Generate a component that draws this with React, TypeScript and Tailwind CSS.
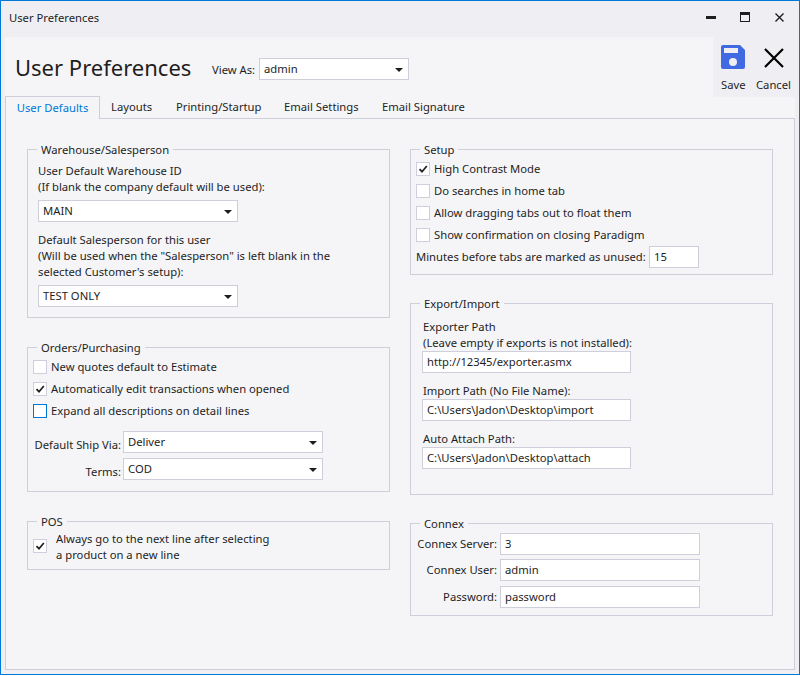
import type { ReactNode } from 'react';

const BORDER = 'border-[#cfcfdc]';

function Group({ title, className, children }: { title: string; className: string; children: ReactNode }) {
  return (
    <div className={`absolute border ${BORDER} ${className}`}>
      <span className="absolute left-[9px] top-[-8px] bg-[#f5f5f8] px-[4px] leading-[16px]">{title}</span>
      {children}
    </div>
  );
}

function Arrow() {
  return (
    <svg width="8" height="4" viewBox="0 0 8 4" className="absolute right-[5px] top-[9px]">
      <path d="M0 0h8L4 4z" fill="#1e1e1e" />
    </svg>
  );
}

function Select({ value, className }: { value: string; className: string }) {
  return (
    <div className={`absolute h-[22px] border ${BORDER} bg-white pl-[4px] leading-[20px] ${className}`}>
      {value}
      <Arrow />
    </div>
  );
}

function Input({ value, className }: { value: string; className: string }) {
  return <div className={`absolute h-[22px] border ${BORDER} bg-white pl-[4px] leading-[20px] ${className}`}>{value}</div>;
}

function Check({ label, checked, focus, className }: { label: ReactNode; checked?: boolean; focus?: boolean; className: string }) {
  return (
    <div className={`absolute flex items-center gap-[4px] ${className}`}>
      <span className={`relative h-[14px] w-[14px] border bg-white ${focus ? 'border-[#0078d7]' : BORDER}`}>
        {checked && (
          <svg width="12" height="12" viewBox="0 0 12 12" className="absolute left-0 top-0">
            <path d="M2.5 6.2 5 8.7 9.8 3" fill="none" stroke="#1e1e1e" strokeWidth="1.7" />
          </svg>
        )}
      </span>
      <span className="whitespace-nowrap leading-[16px]">{label}</span>
    </div>
  );
}

function Text({ children, className }: { children: ReactNode; className: string }) {
  return <div className={`absolute whitespace-nowrap leading-[16px] ${className}`}>{children}</div>;
}

const TABS = [
  { name: 'Layouts', x: 'left-[110px]' },
  { name: 'Printing/Startup', x: 'left-[175px]' },
  { name: 'Email Settings', x: 'left-[283px]' },
  { name: 'Email Signature', x: 'left-[381px]' },
];

export default function App() {
  return (
    <div className="relative h-[675px] w-[800px] overflow-hidden border border-[#0078d7] bg-[#efeff3] font-['Noto_Sans',sans-serif] text-[11.25px] text-[#1e1e1e]">
      <div className="absolute left-[8px] top-[9px] leading-[16px]">User Preferences</div>

      {/* window buttons */}
      <div className="absolute left-[705px] top-[15px] h-[3px] w-[10px] bg-[#1e1e1e]" />
      <div className="absolute left-[739px] top-[11px] h-[10px] w-[10px] border border-t-[3px] border-[#1e1e1e]" />
      <svg width="9" height="9" viewBox="0 0 9 9" className="absolute left-[774px] top-[12px]">
        <path d="M.5.5l8 8M8.5.5l-8 8" stroke="#1e1e1e" strokeWidth="1.4" />
      </svg>

      {/* header */}
      <div className="absolute left-[4px] top-[36px] h-[60px] w-[708px] bg-[#f5f5f8]" />
      <div className="absolute left-[4px] top-[96px] h-[573px] w-[790px] bg-[#f5f5f8]" />
      <div className="absolute left-[14px] top-[48px] text-[22px] leading-[36px] text-[#1e1e1e]">User Preferences</div>
      <Text className="left-[211px] top-[61px]">View As:</Text>
      <Select value="admin" className="left-[258px] top-[57px] w-[150px]" />

      <svg width="24" height="24" viewBox="0 0 24 24" className="absolute left-[720px] top-[44px]">
        <path
          fillRule="evenodd"
          d="M2 0h17l5 5v17a2 2 0 0 1-2 2H2a2 2 0 0 1-2-2V2a2 2 0 0 1 2-2zM3 3v5h14V3zM12 13a4 4 0 1 0 0 8 4 4 0 0 0 0-8z"
          fill="#4169e1"
        />
      </svg>
      <svg width="20" height="20" viewBox="0 0 20 20" className="absolute left-[763px] top-[47px]">
        <path d="M1 1l18 18M19 1L1 19" stroke="#000" strokeWidth="2.2" />
      </svg>
      <Text className="left-[720px] top-[76px]">Save</Text>
      <Text className="left-[755px] top-[76px]">Cancel</Text>

      {/* tab page */}
      <div className={`absolute left-[4px] top-[117px] h-[552px] w-[790px] border ${BORDER}`} />
      <div className={`absolute left-[4px] top-[95px] flex h-[23px] w-[95px] items-center justify-center border border-b-0 ${BORDER} bg-[#f5f5f8] text-[#0078d7]`}>
        User Defaults
      </div>
      {TABS.map((t) => (
        <Text key={t.name} className={`${t.x} top-[98px]`}>
          {t.name}
        </Text>
      ))}

      <Group title="Warehouse/Salesperson" className="left-[26px] top-[148px] h-[169px] w-[363px]">
        <Text className="left-[10px] top-[13px]">User Default Warehouse ID</Text>
        <Text className="left-[10px] top-[29px]">(If blank the company default will be used):</Text>
        <Select value="MAIN" className="left-[10px] top-[50px] w-[200px]" />
        <Text className="left-[10px] top-[82px]">Default Salesperson for this user</Text>
        <Text className="left-[10px] top-[98px]">(Will be used when the "Salesperson" is left blank in the</Text>
        <Text className="left-[10px] top-[114px]">selected Customer's setup):</Text>
        <Select value="TEST ONLY" className="left-[10px] top-[135px] w-[200px]" />
      </Group>

      <Group title="Orders/Purchasing" className="left-[26px] top-[346px] h-[145px] w-[363px]">
        <Check label="New quotes default to Estimate" className="left-[5px] top-[11px]" />
        <Check label="Automatically edit transactions when opened" checked className="left-[5px] top-[33px]" />
        <Check label="Expand all descriptions on detail lines" focus className="left-[5px] top-[55px]" />
        <Text className="right-[268px] top-[89px]">Default Ship Via:</Text>
        <Select value="Deliver" className="left-[95px] top-[83px] w-[200px]" />
        <Text className="right-[268px] top-[116px]">Terms:</Text>
        <Select value="COD" className="left-[95px] top-[110px] w-[200px]" />
      </Group>

      <Group title="POS" className="left-[26px] top-[520px] h-[49px] w-[363px]">
        <Check label="" checked className="left-[5px] top-[17px]" />
        <Text className="left-[28px] top-[9px]">Always go to the next line after selecting</Text>
        <Text className="left-[28px] top-[25px]">a product on a new line</Text>
      </Group>

      <Group title="Setup" className="left-[409px] top-[148px] h-[126px] w-[363px]">
        <Check label="High Contrast Mode" checked className="left-[5px] top-[11px]" />
        <Check label="Do searches in home tab" className="left-[5px] top-[33px]" />
        <Check label="Allow dragging tabs out to float them" className="left-[5px] top-[55px]" />
        <Check label="Show confirmation on closing Paradigm" className="left-[5px] top-[77px]" />
        <Text className="left-[5px] top-[99px]">Minutes before tabs are marked as unused:</Text>
        <Input value="15" className="left-[238px] top-[96px] w-[50px]" />
      </Group>

      <Group title="Export/Import" className="left-[409px] top-[302px] h-[192px] w-[363px]">
        <Text className="left-[12px] top-[15px]">Exporter Path</Text>
        <Text className="left-[12px] top-[31px]">(Leave empty if exports is not installed):</Text>
        <Input value="http://12345/exporter.asmx" className="left-[11px] top-[47px] w-[209px]" />
        <Text className="left-[12px] top-[79px]">Import Path (No File Name):</Text>
        <Input value="C:\Users\Jadon\Desktop\import" className="left-[11px] top-[95px] w-[209px]" />
        <Text className="left-[12px] top-[127px]">Auto Attach Path:</Text>
        <Input value="C:\Users\Jadon\Desktop\attach" className="left-[11px] top-[143px] w-[209px]" />
      </Group>

      <Group title="Connex" className="left-[409px] top-[522px] h-[93px] w-[363px]">
        <Text className="right-[275px] top-[12px]">Connex Server:</Text>
        <Input value="3" className="left-[89px] top-[9px] w-[200px]" />
        <Text className="right-[275px] top-[38px]">Connex User:</Text>
        <Input value="admin" className="left-[89px] top-[35px] w-[200px]" />
        <Text className="right-[275px] top-[65px]">Password:</Text>
        <Input value="password" className="left-[89px] top-[62px] w-[200px]" />
      </Group>
    </div>
  );
}
